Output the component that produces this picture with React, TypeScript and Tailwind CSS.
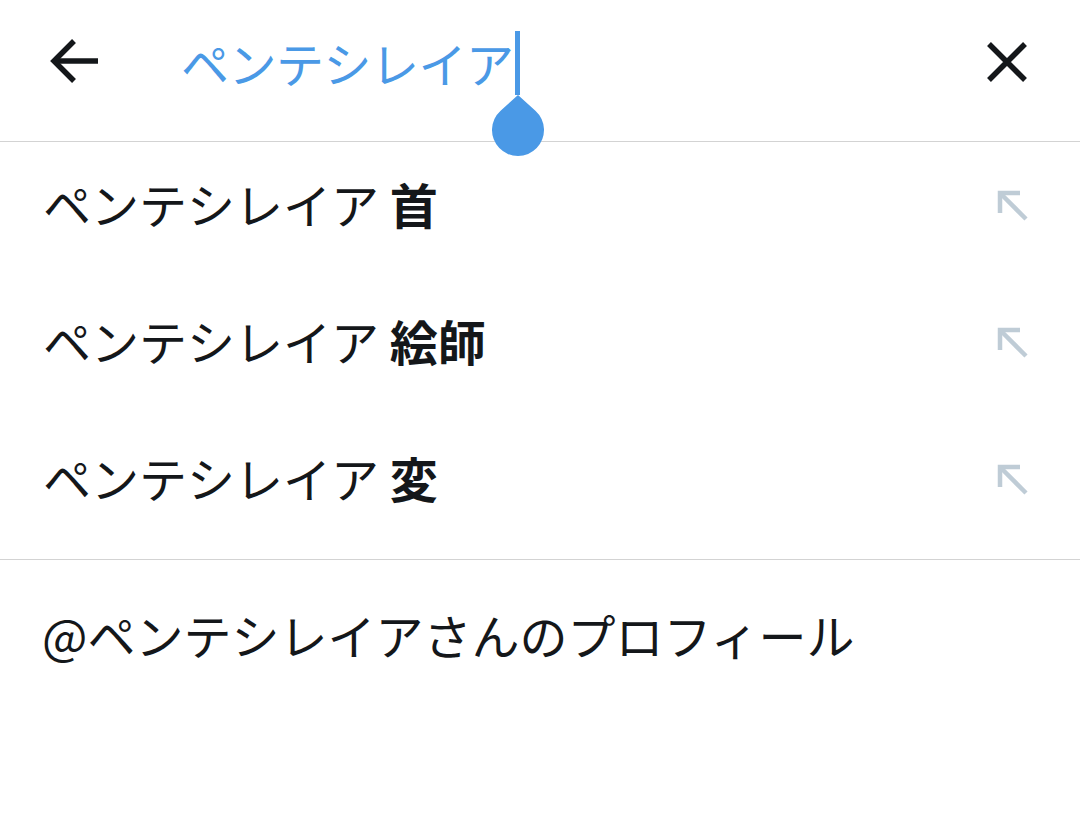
import React from 'react';

const suggestions = [
  { base: 'ペンテシレイア', extra: '首' },
  { base: 'ペンテシレイア', extra: '絵師' },
  { base: 'ペンテシレイア', extra: '変' },
];

function BackArrow() {
  return (
    <svg width="50" height="50" viewBox="0 0 50 50" fill="none" stroke="#14171a" strokeWidth="5.5" strokeLinecap="butt">
      <path d="M3 22h45" />
      <path d="M24 2L4 22l20 20" />
    </svg>
  );
}

function CloseIcon() {
  return (
    <svg width="40" height="40" viewBox="0 0 40 40" fill="none" stroke="#14171a" strokeWidth="5.5">
      <path d="M2 2l36 36M38 2L2 38" />
    </svg>
  );
}

function FillArrow() {
  return (
    <svg width="34" height="34" viewBox="0 0 34 34" fill="none" stroke="#bfccd6" strokeWidth="4.5">
      <path d="M3 23V3h20" />
      <path d="M3 3l26 26" />
    </svg>
  );
}

export default function App() {
  return (
    <div className="w-[1080px] h-[817px] bg-white text-[#14171a] overflow-hidden" style={{ fontFamily: '"Noto Sans CJK JP", "Noto Sans", sans-serif' }}>
      {/* Search header */}
      <div className="h-[142px] border-b border-[#d3d3d3]">
        <div className="h-[124px] flex items-center">
          <div className="w-[181px] pl-[50px] pt-[4px] flex items-center">
            <BackArrow />
          </div>
          <div className="flex-1 flex items-center">
            <span className="text-[48px] leading-none text-[#4a99e6] tracking-[-0.5px]">ペンテシレイア</span>
            <span className="relative ml-[1px] inline-block w-[5px] h-[64px] bg-[#4a99e6] mt-[2px]">
              {/* selection handle */}
              <svg className="absolute left-[-24px] top-[63px]" width="54" height="64" viewBox="0 0 54 64">
                <path d="M27 1L44.4 16.7A26 26 0 1 1 9.6 16.7Z" fill="#4a99e6" />
              </svg>
            </span>
          </div>
          <div className="pr-[53px]">
            <CloseIcon />
          </div>
        </div>
      </div>

      {/* Suggestions */}
      <div className="pb-[6px] border-b border-[#d3d3d3]">
        {suggestions.map((s, i) => (
          <div key={i} className="h-[137px] pb-[7px] flex items-center justify-between pl-[43px] pr-[49px]">
            <span className="text-[48px] leading-none whitespace-pre -mt-[8px]">
              {s.base} <span className="font-bold">{s.extra}</span>
            </span>
            <FillArrow />
          </div>
        ))}
      </div>

      {/* Profile link */}
      <div className="h-[154px] flex items-center pl-[42px]">
        <span className="text-[48px] leading-none -mt-[6px]">@ペンテシレイアさんのプロフィール</span>
      </div>
    </div>
  );
}
